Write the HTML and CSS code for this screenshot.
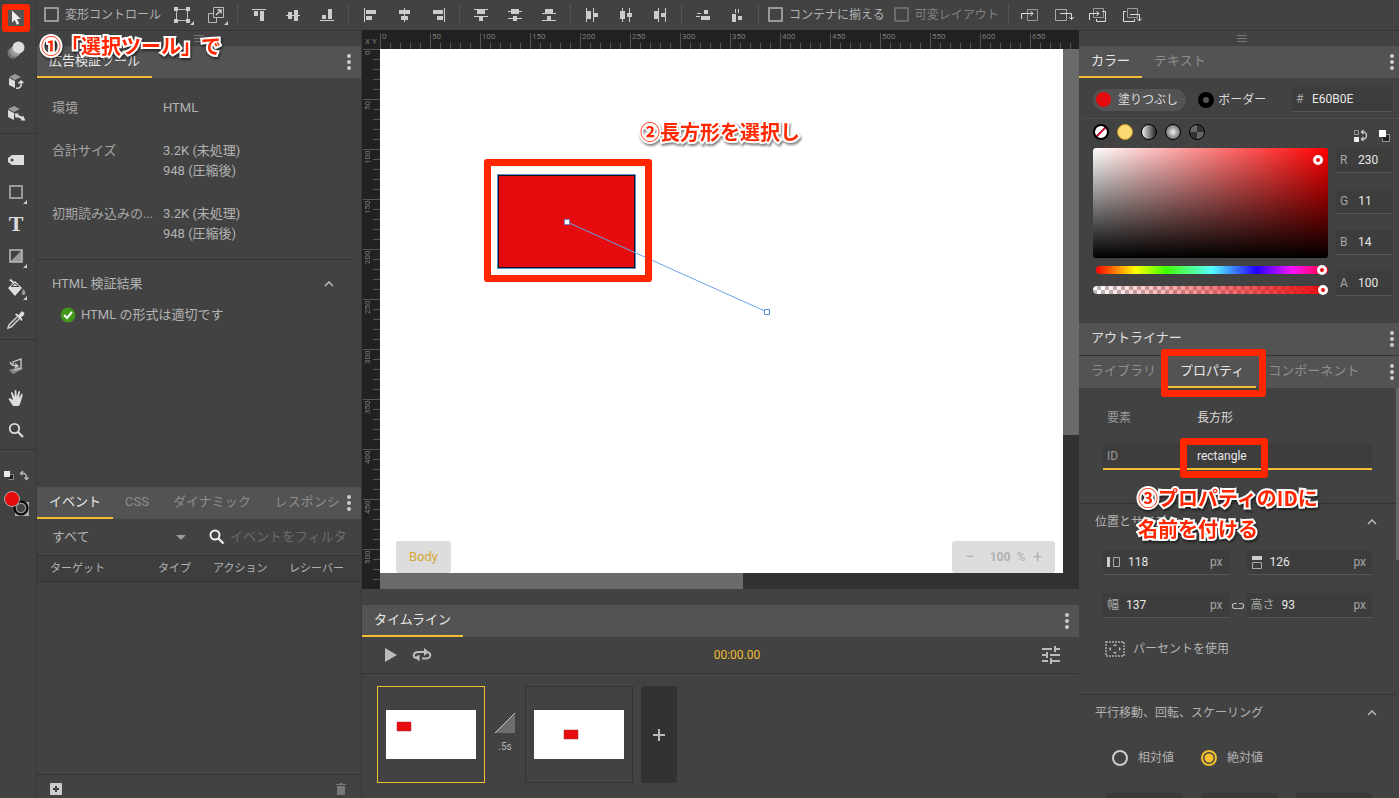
FILE: index.html
```html
<!DOCTYPE html>
<html lang="ja">
<head>
    <meta charset="UTF-8">
    <meta name="viewport" content="width=device-width, initial-scale=1.0">
    <title>rectangle</title>
    <link rel="stylesheet" href="styles.css">
</head>
<body>
    <nav class="tools">
        <div class="tool-group">
            <button class="tool tool-marked" aria-label="選択ツール"><svg width="28" height="28" viewBox="0 0 28 28"><path fill="#555" d="M6 6h16v16H6z"/><path fill="#eee" d="M10 6.500v12l2.700-2.500 2.200 4.800 2.300-1-2.200-4.800h3.800z"/></svg></button>
            <button class="tool" aria-label="3D"><svg width="20" height="20" viewBox="0 0 20 20"><circle cx="7" cy="13" r="5.500" fill="#777"/><circle cx="9.500" cy="11" r="5.500" fill="#999"/><circle cx="12.500" cy="7.500" r="6" fill="#ddd"/></svg></button>
            <button class="tool" aria-label="3D 回転"><svg width="18" height="18" viewBox="0 0 18 18"><path fill="#999" d="M2 4l6-3 6 3-6 3z"/><path fill="#ddd" d="M2 5l6 3v7l-6-3z"/><path fill="none" stroke="#ddd" stroke-width="1.600" d="M9 15c4 1 6-2 5-6M11.500 10.500L14 8l2.500 2"/></svg></button>
            <button class="tool" aria-label="3D 移動"><svg width="20" height="18" viewBox="0 0 20 18"><path fill="#999" d="M2 4l6-3 6 3-6 3z"/><path fill="#ddd" d="M2 5l6 3v7l-6-3zM8.500 8.500l4.500 0-1 1.300 4 2 1-1.300 2.500 5h-5l1-1.500-4.500-2-1 1.500z"/></svg></button>
        </div>
        <div class="tool-group">
            <button class="tool" aria-label="タグ"><svg width="18" height="12" viewBox="0 0 18 12"><path fill="#ddd" fill-rule="evenodd" d="M5 1h12v10H5L1 8V4zM5 4.500a1.500 1.500 0 100 3 1.500 1.500 0 000-3z"/></svg></button>
            <button class="tool more" aria-label="長方形"><svg width="16" height="16" viewBox="0 0 16 16"><path fill="none" stroke="#999" stroke-width="2" d="M2 2h12v12H2z"/></svg></button>
            <button class="tool tool-text">T</button>
            <button class="tool more" aria-label="グラデーション"><svg width="16" height="16" viewBox="0 0 16 16"><path fill="#999" d="M14 2v12H2z"/><path fill="none" stroke="#bbb" stroke-width="1.500" d="M2 2h12v12H2z"/></svg></button>
            <button class="tool more" aria-label="塗りつぶし"><svg width="20" height="20" viewBox="0 0 20 20"><path fill="#ddd" d="M2 10L9 3l7 7-7 8zM3 2l2-1 5 5-1 1z"/><path stroke="#424242" fill="none" d="M5 8.500l4-3 4 3z"/><path fill="#999" d="M17.500 11c-2 3-2.500 6 0 6s2.500-3 0-6z"/></svg></button>
            <button class="tool" aria-label="スポイト"><svg width="20" height="20" viewBox="0 0 20 20"><path fill="none" stroke="#ccc" stroke-width="1.500" d="M11 7l-8 8-1 3 3-1 8-8"/><path fill="#ddd" d="M9 4.500l1.500-1 2 1.500 2.500-3c1.500-1.500 4.500 1 3 3l-3 2.500 1.500 2-1 1.500z"/></svg></button>
        </div>
        <div class="tool-group">
            <button class="tool" aria-label="3D ステージ"><svg width="18" height="18" viewBox="0 0 18 18"><path fill="#888" d="M2 13l10-3 4 2-10 5z"/><path fill="none" stroke="#ccc" stroke-width="1.300" d="M6 8V5l8-3v9l-7 2M3 5c1 3 3 4 7 4M8 6.500l3 2.500-3 2"/></svg></button>
            <button class="tool" aria-label="手のひら"><svg width="18" height="18" viewBox="0 0 18 18"><path fill="#ddd" d="M6 17L1.500 10c0-1 1-1 2-.5L6 11 4 4c0-1 1.300-1.300 1.700-.3L7.500 8 7.800 1.800c.2-1 1.500-1 1.600 0l.3 6 1.800-5.300c.4-1 1.700-.5 1.500.5l-1 6 2.300-3.800c.6-.8 1.700-.2 1.400.8l-2.200 7.500C13 16 12 17 11 17z"/></svg></button>
            <button class="tool" aria-label="ズーム"><svg width="18" height="18" viewBox="0 0 18 18"><circle cx="7.500" cy="7.500" r="4.700" fill="none" stroke="#ddd" stroke-width="1.800"/><path stroke="#ddd" stroke-width="2.200" d="M11 11l5 5"/></svg></button>
        </div>
        <div class="tool-colors">
            <svg width="28" height="12" viewBox="0 0 28 12"><path fill="#222" stroke="#888" d="M6.500 4.500h4v5h-5"/><path fill="#eee" d="M1 1h6v6H1z"/><path fill="none" stroke="#bbb" stroke-width="1.300" d="M18 3.500c4-1.500 5.500 1 5.500 5M20 1l-2.500 2.500L20 5M21.500 7.500l2 2 2-2"/></svg>
            <svg width="28" height="28" viewBox="0 0 28 28"><path fill="#aaa" d="M12 12h14v14H12z"/><circle cx="18" cy="18" r="6.500" fill="#777" stroke="#000" stroke-width="2"/><circle cx="18" cy="18" r="4.500" fill="#444" stroke="#999"/><circle cx="9" cy="9" r="7.500" fill="#e60b0e" stroke="#aaa"/></svg>
        </div>
    </nav>

    <div class="app">
        <header class="options">
            <label class="option-check"><input type="checkbox">変形コントロール</label>
            <div class="option-group">
                <button class="option more" aria-label="変形"><svg width="18" height="18" viewBox="0 0 18 18"><path fill="none" stroke="#bbb" d="M3.500 3.500h11v11h-11z"/><path fill="#ccc" d="M1 1h4v4H1zM13 1h4v4h-4zM1 13h4v4H1zM13 13h4v4h-4z"/></svg></button>
                <button class="option more" aria-label="サイズ変更"><svg width="18" height="18" viewBox="0 0 18 18"><path fill="none" stroke="#bbb" d="M6.500 1.500h10v10h-10zM6 7.500H1.500v9h8V12"/><path fill="none" stroke="#ccc" stroke-width="1.500" d="M9 9l5-5M10.500 4H14v3.500"/></svg></button>
            </div>
            <div class="option-group">
                <button class="option" aria-label="上揃え"><svg width="14" height="14" viewBox="0 0 14 14"><path d="M0 1h14v1H0zM2 3h4v5H2zM8 3h4v10H8z"/></svg></button>
                <button class="option" aria-label="垂直中央揃え"><svg width="14" height="14" viewBox="0 0 14 14"><path d="M0 7h14v1H0zM2 4h4v7H2zM8 2h4v11H8z"/></svg></button>
                <button class="option" aria-label="下揃え"><svg width="14" height="14" viewBox="0 0 14 14"><path d="M0 12h14v1H0zM2 7h4v4H2zM8 1h4v10H8z"/></svg></button>
            </div>
            <div class="option-group">
                <button class="option" aria-label="左揃え"><svg width="14" height="14" viewBox="0 0 14 14"><path d="M1 0h1v14H1zM3 2h10v4H3zM3 8h6v4H3z"/></svg></button>
                <button class="option" aria-label="水平中央揃え"><svg width="14" height="14" viewBox="0 0 14 14"><path d="M7 0h1v14H7zM2 2h11v4H2zM4 8h7v4H4z"/></svg></button>
                <button class="option" aria-label="右揃え"><svg width="14" height="14" viewBox="0 0 14 14"><path d="M13 0h1v14h-1zM2 2h10v4H2zM6 8h6v4H6z"/></svg></button>
            </div>
            <div class="option-group">
                <button class="option" aria-label="上端を分布"><svg width="14" height="14" viewBox="0 0 14 14"><path d="M0 1h14v1H0zM3 2h8v4H3zM0 8h14v1H0zM5 9h4v4H5z"/></svg></button>
                <button class="option" aria-label="中央を垂直分布"><svg width="14" height="14" viewBox="0 0 14 14"><path d="M0 3h14v1H0zM3 1h8v5H3zM0 10h14v1H0zM5 8h4v5H5z"/></svg></button>
                <button class="option" aria-label="下端を分布"><svg width="14" height="14" viewBox="0 0 14 14"><path d="M0 5h14v1H0zM3 1h8v4H3zM0 12h14v1H0zM5 8h4v4H5z"/></svg></button>
            </div>
            <div class="option-group">
                <button class="option" aria-label="左端を分布"><svg width="14" height="14" viewBox="0 0 14 14"><path d="M1 0h1v14H1zM2 3h4v8H2zM8 0h1v14H8zM9 5h4v4H9z"/></svg></button>
                <button class="option" aria-label="中央を水平分布"><svg width="14" height="14" viewBox="0 0 14 14"><path d="M3 0h1v14H3zM1 3h5v8H1zM10 0h1v14h-1zM8 5h5v4H8z"/></svg></button>
                <button class="option" aria-label="右端を分布"><svg width="14" height="14" viewBox="0 0 14 14"><path d="M5 0h1v14H5zM1 3h4v8H1zM12 0h1v14h-1zM8 5h4v4H8z"/></svg></button>
            </div>
            <div class="option-group">
                <button class="option" aria-label="垂直間隔"><svg width="14" height="14" viewBox="0 0 14 14"><path d="M8 2h4v4H8zM5 8h9v4H5zM1 5h4v1H1zM0 8h4v1H0z"/></svg></button>
                <button class="option" aria-label="水平間隔"><svg width="14" height="14" viewBox="0 0 14 14"><path d="M2 6h4v8H2zM8 8h4v4H8zM5 1h1v4H5zM8 1h1v4H8z"/></svg></button>
            </div>
            <label class="option-check"><input type="checkbox">コンテナに揃える</label>
            <label class="option-check option-off"><input type="checkbox" disabled>可変レイアウト</label>
            <div class="option-group option-order">
                <button class="option" aria-label="前面へ"><svg width="20" height="16" viewBox="0 0 20 16"><path stroke="#999" d="M7.500 2.500h10v11h-10z"/><path stroke="#ddd" d="M1.500 12V6.500H13M10.500 4l2.500 2.500L10.500 9"/></svg></button>
                <button class="option" aria-label="背面へ"><svg width="20" height="16" viewBox="0 0 20 16"><path stroke="#aaa" d="M1.500 2.500h11v11h-11z"/><path stroke="#ddd" d="M6 6.500h11.500V12M15 10l2.500 2.500L20 10"/></svg></button>
                <button class="option" aria-label="最前面へ"><svg width="20" height="16" viewBox="0 0 20 16"><path stroke="#999" d="M5.500 1.500h10v9h-10z"/><path stroke="#ddd" d="M14 4.500h3.500v10h-9V12M1.500 13V6.500H11M8.500 4L11 6.500 8.500 9"/></svg></button>
                <button class="option" aria-label="最背面へ"><svg width="20" height="16" viewBox="0 0 20 16"><path stroke="#999" d="M5.500 1.500h10v9h-10z"/><path stroke="#ddd" d="M4 4.500H1.500v10h11V12M8 7.500h9.500V14M15 11.500l2.500 2.500 2-2.500"/></svg></button>
            </div>
        </header>

        <div class="workspace">
            <aside class="side side-left">
                <div class="grip"><i></i></div>
                <section class="panel">
                    <div class="tabs"><button class="tab active">広告検証ツール</button><button class="menu" aria-label="メニュー"><i></i><i></i><i></i></button></div>
                    <dl class="facts">
                        <dt>環境</dt><dd>HTML</dd>
                        <dt>合計サイズ</dt><dd>3.2K (未処理)<br>948 (圧縮後)</dd>
                        <dt>初期読み込みの...</dt><dd>3.2K (未処理)<br>948 (圧縮後)</dd>
                    </dl>
                    <div class="result">
                        <div class="result-title">HTML 検証結果<svg class="chevron" width="10" height="6" viewBox="0 0 10 6"><path d="M1 5l4-4 4 4"/></svg></div>
                        <p class="result-ok"><svg width="16" height="16" viewBox="0 0 16 16"><circle cx="8" cy="8" r="7.500" fill="#43961c"/><path fill="none" stroke="#fff" stroke-width="2" d="M4 8l3 3 5-6"/></svg>HTML の形式は適切です</p>
                    </div>
                </section>
                <section class="events">
                    <div class="tabs">
                        <div class="tab-list"><button class="tab active">イベント</button><button class="tab">CSS</button><button class="tab">ダイナミック</button><button class="tab">レスポンシ</button></div>
                        <button class="menu" aria-label="メニュー"><i></i><i></i><i></i></button>
                    </div>
                    <div class="filter">
                        <select class="filter-select" aria-label="ターゲット"><option>すべて</option></select>
                        <svg class="filter-arrow" width="10" height="5" viewBox="0 0 10 5"><path fill="#999" d="M0 0h10L5 5z"/></svg>
                        <svg width="16" height="16" viewBox="0 0 16 16"><circle cx="6" cy="6" r="4.500" fill="none" stroke="#eee" stroke-width="2"/><path stroke="#eee" stroke-width="2.200" d="M9.500 9.500l5 5"/></svg>
                        <input class="filter-input" type="text" placeholder="イベントをフィルタ" aria-label="イベントをフィルタ">
                    </div>
                    <table class="event-table">
                        <thead><tr><th class="col-target">ターゲット</th><th class="col-type">タイプ</th><th class="col-action">アクション</th><th>レシーバー</th></tr></thead>
                    </table>
                    <div class="event-actions">
                        <button aria-label="追加"><svg width="12" height="12" viewBox="0 0 12 12"><rect width="12" height="12" rx="1" fill="#ccc"/><path stroke="#424242" stroke-width="2" d="M6 3v6M3 6h6"/></svg></button>
                        <button aria-label="削除"><svg width="10" height="12" viewBox="0 0 10 12"><path fill="#777" d="M0 1h3l1-1h2l1 1h3v1H0zM1 3h8v9H1z"/></svg></button>
                    </div>
                </section>
            </aside>

            <main class="center">
                <div class="editor">
                    <div class="ruler-top">
                        <span class="ruler-corner">X Y</span>
                        <div class="ruler-x"><span>0</span><span>50</span><span>100</span><span>150</span><span>200</span><span>250</span><span>300</span><span>350</span><span>400</span><span>450</span><span>500</span><span>550</span><span>600</span><span>650</span></div>
                    </div>
                    <div class="ruler-y"><span>0</span><span>50</span><span>100</span><span>150</span><span>200</span><span>250</span><span>300</span><span>350</span><span>400</span><span>450</span><span>500</span></div>
                    <div class="stage">
                        <div class="shape"></div>
                        <div class="mark mark-shape"></div>
                        <svg class="motion" width="400" height="280" viewBox="0 0 400 280"><path fill="none" stroke="#6ba2ea" d="M187 173l200 90"/><path fill="#fff" stroke="#7a7fd0" d="M184.500 170.500h5v5h-5z"/><path fill="#fff" stroke="#5090d8" d="M384.500 260.500h5v5h-5z"/></svg>
                        <p class="note note-shape">②長方形を選択し</p>
                        <button class="crumb">Body</button>
                        <div class="zoom"><button aria-label="縮小">−</button><label><input type="text" value="100" aria-label="ズーム">%</label><button aria-label="拡大">+</button></div>
                    </div>
                    <div class="scroll-y"><div class="thumb-y"></div></div>
                    <div class="scroll-x"><div class="thumb-x"></div></div>
                </div>

                <section class="timeline">
                    <div class="tabs"><button class="tab active">タイムライン</button><button class="menu" aria-label="メニュー"><i></i><i></i><i></i></button></div>
                    <div class="playback">
                        <button aria-label="再生"><svg width="12" height="14" viewBox="0 0 12 14"><path fill="#bbb" d="M0 0l12 7-12 7z"/></svg></button>
                        <button aria-label="ループ"><svg width="20" height="14" viewBox="0 0 20 14"><path fill="none" stroke="#bbb" stroke-width="2" d="M9 4H6C1 4 .5 9 4 10M10 10.500h4c5 0 5.500-5 2-6"/><path fill="#bbb" d="M12 0l5 4-5 4V5H9V3h3zM7.500 6.500v7l-5-4z"/></svg></button>
                        <span class="time">00:00.00</span>
                        <button aria-label="設定"><svg width="18" height="18" viewBox="0 0 18 18"><path fill="#bbb" d="M0 2h10v2H0zM12 0h2v2h4v2h-4v2h-2zM0 8h4V6h2v6H4v-2H0zM8 8h10v2H8zM0 14h6v2H0zM8 12h2v2h8v2h-8v2H8z"/></svg></button>
                    </div>
                    <div class="frames">
                        <button class="frame active" aria-label="フレーム 1"><svg width="90" height="49" viewBox="0 0 90 49"><path fill="#fff" d="M0 0h90v49H0z"/><path fill="#e60b0e" stroke="#a33" stroke-width=".5" d="M11 12h14v9H11z"/></svg></button>
                        <div class="gap"><svg width="20" height="20" viewBox="0 0 20 20"><path fill="#6e6e6e" d="M20 1v19H0z"/><path stroke="#ccc" d="M0 20L20 0"/></svg>.5s</div>
                        <button class="frame" aria-label="フレーム 2"><svg width="90" height="49" viewBox="0 0 90 49"><path fill="#fff" d="M0 0h90v49H0z"/><path fill="#e60b0e" stroke="#a33" stroke-width=".5" d="M30 20h14v9H30z"/></svg></button>
                        <button class="frame-add" aria-label="フレームを追加"><svg width="12" height="12" viewBox="0 0 12 12"><path stroke="#bbb" stroke-width="2" d="M6 0v12M0 6h12"/></svg></button>
                    </div>
                </section>
            </main>

            <aside class="side side-right">
                <div class="grip"><i></i></div>
                <section class="color">
                    <div class="tabs"><button class="tab active">カラー</button><button class="tab">テキスト</button><button class="menu" aria-label="メニュー"><i></i><i></i><i></i></button></div>
                    <div class="paint">
                        <button class="paint-fill"><i></i>塗りつぶし</button>
                        <button class="paint-border"><i></i>ボーダー</button>
                        <label class="field field-hex"><span>#</span><input type="text" value="E60B0E"></label>
                    </div>
                    <div class="fills">
                        <button class="fill fill-none" aria-label="なし"></button>
                        <button class="fill fill-solid" aria-label="単色"></button>
                        <button class="fill fill-linear" aria-label="線形"></button>
                        <button class="fill fill-radial" aria-label="放射状"></button>
                        <button class="fill fill-image" aria-label="画像"></button>
                        <svg class="fill-swap" width="36" height="14" viewBox="0 0 36 14"><path fill="none" stroke="#999" d="M.5 1.500h4v4h-4z"/><path fill="#eee" d="M0 8h5v5H0z"/><path fill="none" stroke="#ccc" stroke-width="1.300" d="M8 3c6-1 6 8 0 7M9.500 1l-2 2 2 2M9.500 8l-2 2 2 2"/><path fill="#222" stroke="#999" d="M30.500 5.500h5v7h-7v-3"/><path fill="#fff" d="M25 1h7v7h-7z"/></svg>
                    </div>
                    <div class="picker">
                        <div class="picker-main">
                            <div class="spectrum"><i></i></div>
                            <input class="hue" type="range" min="0" max="360" value="358" aria-label="色相">
                            <input class="alpha" type="range" min="0" max="100" value="100" aria-label="不透明度">
                        </div>
                        <div class="channels">
                            <label class="field"><span>R</span><input type="text" value="230"></label>
                            <label class="field"><span>G</span><input type="text" value="11"></label>
                            <label class="field"><span>B</span><input type="text" value="14"></label>
                            <label class="field"><span>A</span><input type="text" value="100"></label>
                        </div>
                    </div>
                </section>
                <div class="tabs tabs-line"><button class="tab bright">アウトライナー</button><button class="menu" aria-label="メニュー"><i></i><i></i><i></i></button></div>
                <section class="properties">
                    <div class="tabs"><button class="tab">ライブラリ</button><button class="tab active marked">プロパティ<span class="mark mark-tab"></span></button><button class="tab">コンポーネント</button><button class="menu" aria-label="メニュー"><i></i><i></i><i></i></button></div>
                    <div class="prop-body">
                        <div class="prop-row"><span>要素</span><b>長方形</b></div>
                        <div class="prop-row prop-id"><label for="element-id">ID</label><input id="element-id" type="text" value="rectangle"><span class="mark mark-id"></span></div>
                        <div class="prop-section prop-position">
                            <h3>位置とサイズ<svg class="chevron" width="10" height="6" viewBox="0 0 10 6"><path d="M1 5l4-4 4 4"/></svg></h3>
                            <p class="note note-id">③プロパティのIDに<br>名前を付ける</p>
                            <div class="size-grid">
                                <label class="field"><svg width="14" height="12" viewBox="0 0 14 12"><path fill="#ccc" d="M0 1h3v10H0z"/><path fill="none" stroke="#aaa" d="M6.500 1.500h6v9h-6z"/></svg><input type="text" value="118" aria-label="左"><em>px</em></label>
                                <span></span>
                                <label class="field"><svg width="12" height="14" viewBox="1 0 12 14"><path fill="#ccc" d="M2 1h10v4H2z"/><path fill="none" stroke="#aaa" d="M2.500 7.500h9v6h-9z"/></svg><input type="text" value="126" aria-label="上"><em>px</em></label>
                                <label class="field"><span>幅</span><input type="text" value="137"><em>px</em></label>
                                <svg width="14" height="8" viewBox="0 0 14 8"><path fill="none" stroke="#bbb" stroke-width="1.200" d="M6 1.500H4C.5 1.500.5 6.500 4 6.500h6c3.500 0 3.500-5 0-5H8"/></svg>
                                <label class="field"><span>高さ</span><input type="text" value="93"><em>px</em></label>
                            </div>
                            <button class="percent"><svg width="20" height="16" viewBox="0 0 20 16"><path fill="none" stroke="#aaa" stroke-width="1.500" stroke-dasharray="2 1" d="M1 1h18v14H1z"/><path fill="#bbb" d="M10 3l2 2H8zM10 13l2-2H8zM4 8l2-2v4zM16 8l-2-2v4z"/></svg>パーセントを使用</button>
                        </div>
                        <div class="prop-section">
                            <h3>平行移動、回転、スケーリング<svg class="chevron" width="10" height="6" viewBox="0 0 10 6"><path d="M1 5l4-4 4 4"/></svg></h3>
                            <div class="modes"><label><input type="radio" name="mode">相対値</label><label><input type="radio" name="mode" checked>絶対値</label></div>
                            <div class="axes"><i></i><i></i><i></i></div>
                        </div>
                        <div class="prop-scroll"></div>
                    </div>
                </section>
            </aside>
        </div>
    </div>
    <p class="note note-tool">①「選択ツール」で</p>
</body>
</html>
```
FILE: styles.css
```css
* {
    box-sizing: border-box;
}

body {
    margin: 0;
    height: 100vh;
    display: flex;
    overflow: hidden;
    position: relative;
    background: #424242;
    color: #b3b3b3;
    font-family: Roboto, "Noto Sans CJK JP", sans-serif;
    font-size: 13px;
    line-height: 20px;
}

button, input, select {
    margin: 0;
    padding: 0;
    border: 0;
    background: none;
    color: inherit;
    font: inherit;
    outline: none;
}

svg {
    display: block;
    flex: none;
}

p, h3, dl, dd {
    margin: 0;
    font-weight: normal;
}

/* tool bar */
.tools {
    flex: 0 0 37px;
    border-right: 1px solid #383838;
}

.tool-group {
    display: flex;
    flex-direction: column;
    padding: 10px 4px 3px 0;
    border-bottom: 1px solid #333;
}

.tool-group:first-child {
    padding-top: 2px;
}

.tool {
    height: 32px;
    display: flex;
    align-items: center;
    justify-content: center;
}

.tool-marked svg {
    background: #ff2600;
    border-radius: 3px;
}

.tool-text {
    font: bold 22px "Liberation Serif", serif;
    color: #ddd;
}

.more {
    position: relative;
}

.more::after {
    content: "";
    position: absolute;
    right: 5px;
    bottom: 4px;
    border-left: 4px solid transparent;
    border-bottom: 4px solid #ccc;
}

.tool-colors {
    display: flex;
    flex-direction: column;
    gap: 8px;
    padding: 20px 3px;
}

/* options bar */
.app {
    flex: 1;
    min-width: 0;
    display: flex;
    flex-direction: column;
}

.options {
    flex: 0 0 30px;
    display: flex;
    align-items: center;
    padding: 0 0 1px 2px;
    overflow: hidden;
}

.option-check {
    display: flex;
    align-items: center;
    gap: 6px;
    padding: 0 4px 0 5px;
    font-size: 12px;
    white-space: nowrap;
}

.option-check input {
    appearance: none;
    width: 15px;
    height: 15px;
    border: 2px solid #999;
    border-radius: 1px;
}

.option-off {
    color: #808080;
}

.option-off input {
    border-color: #6a6a6a;
}

.option-group {
    display: flex;
    padding-right: 4px;
    border-right: 1px solid #545454;
    margin-right: 4px;
}

.option {
    width: 34px;
    height: 21px;
    display: flex;
    align-items: center;
    justify-content: center;
    fill: #ccc;
}

.option.more::after {
    bottom: 0;
}

.option-order {
    padding-left: 4px;
    border-right: 0;
    border-left: 1px solid #545454;
    margin-left: 5px;
}

.option-order svg {
    fill: none;
}

/* panels */
.workspace {
    flex: 1;
    min-height: 0;
    display: flex;
}

.side {
    min-width: 0;
    display: flex;
    flex-direction: column;
    border-top: 1px solid #363636;
}

.side-left {
    flex: 0 0 324px;
}

.side-right {
    flex: 0 0 320px;
    overflow: hidden;
}

.grip {
    flex: 0 0 15px;
    display: flex;
    align-items: center;
    justify-content: center;
}

.grip i {
    width: 10px;
    height: 7px;
    border: solid #777;
    border-width: 1px 0;
    background: linear-gradient(#777, #777) center / 100% 1px no-repeat;
}

.side-right .grip {
    padding-left: 5px;
}

.tabs {
    flex: none;
    height: 32px;
    display: flex;
    background: #535353;
}

.tab-list {
    display: flex;
    min-width: 0;
    margin-right: -12px;
    overflow: hidden;
}

.tab {
    flex: none;
    padding: 0 12px;
    border-bottom: 2px solid transparent;
    color: #8e8e8e;
    white-space: nowrap;
}

.tab.active {
    border-color: #f0be30;
    color: #e8e8e8;
}

.tab.bright {
    color: #e0e0e0;
}

.menu {
    flex: none;
    display: flex;
    flex-direction: column;
    align-items: center;
    justify-content: center;
    gap: 2px;
    width: 24px;
    margin-left: auto;
}

.menu i {
    width: 4px;
    height: 4px;
    border-radius: 50%;
    background: #ccc;
}

.side-right .menu {
    width: 14px;
}

.tabs-line {
    height: 33px;
    border-bottom: 1px solid #333;
}

.chevron {
    fill: none;
    stroke: #bbb;
    stroke-width: 1.5;
}

.panel {
    flex: 1;
}

.facts {
    display: grid;
    grid-template-columns: 111px 1fr;
    row-gap: 23px;
    margin-right: 8px;
    padding: 20px 0 15px 15px;
    border-bottom: 1px solid #333;
}

.facts dt {
    color: #a6a6a6;
}

.result {
    padding: 14px 27px 0 15px;
}

.result-title {
    display: flex;
    align-items: center;
    justify-content: space-between;
}

.result-ok {
    display: flex;
    align-items: center;
    gap: 5px;
    padding: 11px 0 0 8px;
}

/* events */
.events {
    flex: 0 0 311px;
    display: flex;
    flex-direction: column;
}

.filter {
    flex: 0 0 36px;
    display: flex;
    align-items: center;
    padding: 0 14px 0 15px;
}

.filter-select {
    appearance: none;
    flex: 1;
    min-width: 0;
}

.filter-arrow {
    margin-right: 23px;
}

.filter-input {
    width: 117px;
    margin-left: 5px;
}

.filter-input::placeholder {
    color: #6c6c6c;
}

.event-table {
    width: 100%;
    height: 27px;
    table-layout: fixed;
    border-collapse: collapse;
    border: solid #333;
    border-width: 1px 0;
    background: #3e3e3e;
    font-size: 11px;
}

.event-table th {
    padding: 0;
    font-weight: normal;
    text-align: left;
    white-space: nowrap;
}

.event-table .col-target {
    width: 121px;
    padding-left: 13px;
}

.col-type {
    width: 55px;
}

.col-action {
    width: 76px;
}

.event-actions {
    flex: 0 0 24px;
    display: flex;
    align-items: center;
    justify-content: space-between;
    margin-top: auto;
    padding: 5px 15px 0 13px;
    border-top: 1px solid #333;
}

/* canvas */
.center {
    flex: 1;
    min-width: 0;
    display: flex;
    flex-direction: column;
    gap: 16px;
    border-left: 1px solid #383838;
}

.editor {
    flex: 1;
    min-height: 0;
    display: grid;
    grid-template-columns: 18px minmax(0, 1fr) 16px;
    grid-template-rows: 19px minmax(0, 1fr) 16px;
    background: #212121;
    color: #7c7c7c;
    font-size: 8px;
    line-height: 10px;
}

.ruler-top {
    grid-column: 1 / 4;
    display: flex;
    align-items: flex-end;
    overflow: hidden;
}

.ruler-corner {
    flex: 0 0 18px;
    padding-bottom: 2px;
    text-align: center;
}

.ruler-x {
    flex: 1;
    display: flex;
    height: 16px;
    overflow: hidden;
    background: repeating-linear-gradient(90deg, #555 0 1px, transparent 1px 50px), repeating-linear-gradient(90deg, #555 0 1px, transparent 1px 10px) bottom / 100% 6px no-repeat;
}

.ruler-x span {
    flex: 0 0 50px;
    padding-left: 2px;
    line-height: 8px;
}

.ruler-y {
    grid-row: 2 / 4;
    margin-left: 1px;
    overflow: hidden;
    background: repeating-linear-gradient(#555 0 1px, transparent 1px 50px), repeating-linear-gradient(#555 0 1px, transparent 1px 10px) right / 7px 100% no-repeat;
}

.ruler-y span {
    display: block;
    width: 9px;
    height: 50px;
    padding-bottom: 2px;
    writing-mode: vertical-rl;
    transform: rotate(180deg);
    text-align: right;
    line-height: 9px;
}

.stage {
    position: relative;
    overflow: hidden;
    background: #fff;
}

.shape {
    position: absolute;
    left: 117px;
    top: 125px;
    width: 139px;
    height: 95px;
    border: 1px solid #5b94d6;
    background: #e60b0e;
    box-shadow: inset 0 0 0 1px #111;
}

.motion {
    position: absolute;
    left: 0;
    top: 0;
    z-index: 1;
}

.mark {
    position: absolute;
    border: 7px solid #ff2600;
    border-radius: 3px;
    z-index: 2;
}

.mark-shape {
    left: 104px;
    top: 110px;
    width: 168px;
    height: 123px;
}

.note {
    position: absolute;
    z-index: 3;
    color: #ff2600;
    font: bold 20px/31px "Noto Sans CJK JP", sans-serif;
    white-space: nowrap;
    -webkit-text-stroke: 4px #fff;
    paint-order: stroke fill;
    filter: drop-shadow(1px 2px 1px rgba(0, 0, 0, .5));
}

.note-shape {
    left: 260px;
    top: 67px;
}

.note-tool {
    left: 41px;
    top: 30px;
}

.crumb {
    position: absolute;
    left: 16px;
    bottom: 0;
    width: 55px;
    height: 32px;
    border-radius: 3px;
    background: #ddd;
    color: #d4a836;
    font-size: 13px;
}

.zoom {
    position: absolute;
    right: 8px;
    bottom: 0;
    width: 103px;
    height: 32px;
    display: flex;
    align-items: center;
    justify-content: space-between;
    padding: 0 13px;
    border-radius: 3px;
    background: #ddd;
    color: #b0b0b0;
    font-size: 12px;
}

.zoom button {
    font-size: 16px;
}

.zoom label {
    padding-left: 8px;
}

.zoom input {
    width: 27px;
    font-weight: bold;
}

.scroll-y {
    background: #323232;
}

.thumb-y {
    height: 386px;
    background: #6a6a6a;
}

.scroll-x {
    grid-column: 2 / 4;
    background: #323232;
}

.thumb-x {
    width: 363px;
    height: 100%;
    background: #6a6a6a;
}

/* timeline */
.timeline {
    flex: 0 0 193px;
}

.playback {
    height: 37px;
    display: flex;
    align-items: center;
    gap: 15px;
    padding: 0 19px 0 23px;
    border-bottom: 1px solid #333;
}

.time {
    flex: 1;
    color: #f0be30;
    font-size: 12px;
    text-align: center;
}

.frames {
    display: flex;
    padding: 12px 15px;
}

.frame {
    width: 108px;
    height: 97px;
    display: flex;
    align-items: center;
    justify-content: center;
    border: 1px solid #333;
}

.frame.active {
    border-color: #f0be30;
}

.gap {
    width: 40px;
    display: flex;
    flex-direction: column;
    align-items: center;
    gap: 4px;
    padding-top: 27px;
    font-size: 10px;
}

.frame-add {
    width: 36px;
    display: flex;
    align-items: center;
    justify-content: center;
    margin-left: 8px;
    border-radius: 3px;
    background: #323232;
}

/* colour */
.color {
    flex: 0 0 277px;
}

.paint {
    height: 41px;
    display: flex;
    align-items: center;
    margin-left: 5px;
    padding: 3px 7px 0 9px;
    border-bottom: 1px solid #4e4e4e;
    color: #ddd;
    font-size: 12px;
}

.paint button {
    display: flex;
    align-items: center;
}

.paint-fill {
    height: 22px;
    gap: 7px;
    padding: 0 8px 0 3px;
    border-radius: 11px;
    background: #535353;
}

.paint-fill i {
    width: 15px;
    height: 15px;
    border-radius: 50%;
    background: #e60b0e;
}

.paint-border {
    gap: 4px;
    margin-left: 12px;
}

.paint-border i {
    width: 16px;
    height: 16px;
    border: 5px solid #000;
    border-radius: 50%;
    background: #555;
}

.field {
    height: 25px;
    display: flex;
    align-items: center;
    gap: 10px;
    padding: 0 4px;
    border-bottom: 1px solid #555;
    background: #3d3d3d;
    color: #a6a6a6;
    font-size: 12px;
}

.field input {
    flex: 1;
    width: 0;
    min-width: 0;
    color: #e6e6e6;
}

.field span {
    min-width: 8px;
}

.field em {
    font-style: normal;
}

.field-hex {
    width: 100px;
    gap: 8px;
    margin-left: auto;
}

.fills {
    height: 29px;
    display: flex;
    align-items: center;
    gap: 8px;
    padding: 0 9px 3px 14px;
}

.fill {
    width: 16px;
    height: 16px;
    border: 2px solid #000;
    border-radius: 50%;
}

.fill-none {
    background: linear-gradient(135deg, #fff 45%, #c02040 45% 55%, #fff 55%);
}

.fill-solid {
    border: 1px solid #c99a20;
    background: #fbd971;
}

.fill-linear {
    border-width: 1px;
    background: linear-gradient(90deg, #eee, #222);
}

.fill-radial {
    border-width: 1px;
    background: radial-gradient(#eee, #444);
}

.fill-image {
    border-width: 1px;
    background: conic-gradient(#333 25%, #666 0 50%, #333 0 75%, #666 0);
}

.fill-swap {
    margin: 7px 0 0 auto;
}

.picker {
    display: flex;
    gap: 8px;
    padding: 0 7px 0 14px;
}

.picker-main {
    flex: 1;
}

.spectrum {
    position: relative;
    height: 110px;
    border-radius: 3px;
    background: linear-gradient(transparent, #000), linear-gradient(90deg, #fff, #f00);
}

.spectrum i {
    position: absolute;
    right: 5px;
    top: 7px;
    width: 10px;
    height: 10px;
    border: 3px solid #fff;
    border-radius: 50%;
}

.hue, .alpha {
    appearance: none;
    display: block;
    width: 100%;
    height: 8px;
    border-radius: 4px;
}

.hue {
    width: calc(100% - 3px);
    margin: 8px 0 12px 3px;
    background: linear-gradient(90deg, #f00, #ff0 17%, #4f0 30%, #5ff 50%, #20f 69%, #f1f 85%, #f02);
}

.alpha {
    background: linear-gradient(90deg, transparent, #e60b0e), repeating-conic-gradient(#bbb 0 25%, #fff 0 50%) 0 0 / 8px 8px;
}

.hue::-webkit-slider-thumb, .alpha::-webkit-slider-thumb {
    appearance: none;
    width: 10px;
    height: 10px;
    border: 3px solid #fff;
    border-radius: 50%;
    background: #e60b0e;
}

.channels {
    flex: 0 0 56px;
    display: flex;
    flex-direction: column;
    gap: 16px;
}

/* properties */
.properties {
    flex: 1;
    min-height: 0;
    display: flex;
    flex-direction: column;
}

.marked {
    position: relative;
}

.mark-tab {
    left: -7px;
    right: -10px;
    top: -7px;
    bottom: -11px;
}

.prop-body {
    position: relative;
    flex: 1;
    font-size: 12px;
}

.prop-row {
    display: flex;
    align-items: center;
    margin: 20px 27px 0 24px;
    padding-left: 4px;
}

.prop-row > :first-child {
    width: 90px;
    color: #999;
}

.prop-row b {
    color: #ddd;
    font-weight: normal;
}

.prop-id {
    position: relative;
    height: 26px;
    margin-top: 16px;
    margin-bottom: 33px;
    border-bottom: 2px solid #f0be30;
    background: #3d3d3d;
}

.prop-id input {
    flex: 1;
    min-width: 0;
    color: #e8e8e8;
}

.mark-id {
    left: 77px;
    top: -6px;
    width: 88px;
    height: 40px;
}

.prop-section {
    position: relative;
    margin-right: 3px;
    padding: 8px 24px 0;
    border-top: 1px solid #333;
}

.prop-position {
    height: 191px;
}

.prop-section h3 {
    display: flex;
    align-items: center;
    justify-content: space-between;
    margin: 0 -5px 0 -8px;
    font-size: 12px;
}

.note-id {
    left: 59px;
    top: -22px;
}

.size-grid {
    display: grid;
    grid-template-columns: 1fr 18px 1fr;
    gap: 18px 0;
    align-items: center;
    justify-items: center;
    margin-top: 18px;
}

.size-grid .field {
    width: 100%;
    gap: 7px;
    padding-right: 6px;
}

.percent {
    display: flex;
    align-items: center;
    gap: 8px;
    margin-top: 21px;
    padding-left: 2px;
}

.modes {
    display: flex;
    gap: 27px;
    padding: 25px 0 0 9px;
}

.modes label {
    display: flex;
    align-items: center;
    gap: 10px;
}

.modes input {
    appearance: none;
    width: 16px;
    height: 16px;
    border: 2px solid #ccc;
    border-radius: 50%;
}

.modes input:checked {
    border-color: #f0be30;
    background: radial-gradient(#f9c02c 4px, transparent 5px);
}

.axes {
    display: flex;
    gap: 18px;
    padding: 25px 0 0 4px;
}

.axes i {
    flex: 1;
    height: 24px;
    background: #3a3a3a;
}

.prop-scroll {
    position: absolute;
    right: 0;
    top: 0;
    width: 3px;
    height: 172px;
    background: #666;
}
```
